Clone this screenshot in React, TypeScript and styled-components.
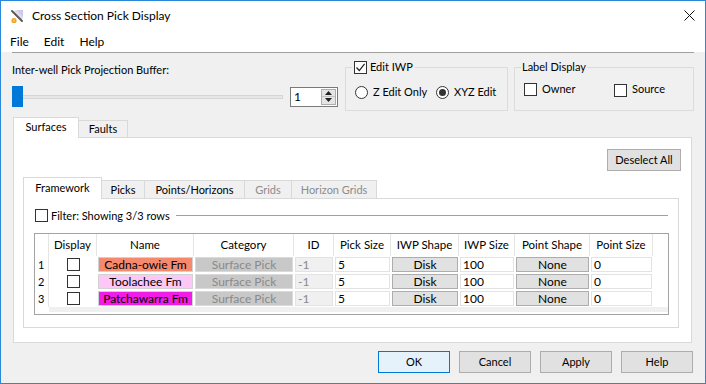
import React from "react";
import styled, { createGlobalStyle } from "styled-components";

const GlobalStyle = createGlobalStyle`
  html, body { margin: 0; padding: 0; background: #fff; }
  body { font-family: Lato, "Noto Sans", sans-serif; font-size: 11px; color: #000; }
  * { box-sizing: border-box; }
`;

const Window = styled.div`
  width: 706px;
  height: 384px;
  border: 1px solid #2b87d9;
  background: #f0f0f0;
  display: flex;
  flex-direction: column;
  overflow: hidden;
`;

const TitleBar = styled.div`
  height: 29px;
  background: #fff;
  display: flex;
  align-items: center;
  padding-left: 8px;
  padding-right: 10px;
  font-size: 12px;
`;

const TitleText = styled.span`
  margin-left: 7px;
  flex: 1;
  line-height: 16px;
`;

const MenuBar = styled.div`
  height: 22px;
  background: #fff;
  display: flex;
  align-items: center;
  padding-left: 9px;
  gap: 15px;
  font-size: 12px;
`;

const MenuItem = styled.span`
  line-height: 16px;
  padding-top: 1px;
`;

const Separator = styled.div`
  height: 1px;
  margin: 0 11px 0 11px;
  background: #a0a0a0;
`;

const TopRow = styled.div`
  margin-top: 5px;
  height: 53px;
  display: flex;
  align-items: flex-start;
  padding-left: 11px;
`;

const BufferColumn = styled.div`
  width: 328px;
  display: flex;
  flex-direction: column;
  padding-top: 4px;
`;

const Label = styled.span<{ $disabled?: boolean }>`
  line-height: 16px;
  white-space: nowrap;
  color: ${(p) => (p.$disabled ? "#8c8c8c" : "#000")};
`;

const SliderRow = styled.div`
  margin-top: 8px;
  display: flex;
  align-items: center;
  height: 21px;
`;

const SliderTrack = styled.div`
  width: 271px;
  height: 21px;
  display: flex;
  align-items: center;
`;

const SliderThumb = styled.div`
  width: 11px;
  height: 21px;
  background: #0078d7;
  flex: none;
`;

const SliderGroove = styled.div`
  flex: 1;
  height: 4px;
  background: #e7e7e7;
  border: 1px solid #d6d6d6;
  border-left: none;
`;

const SpinBox = styled.div`
  margin-left: 7px;
  width: 48px;
  height: 20px;
  border: 1px solid #7a7a7a;
  background: #fff;
  display: flex;
  align-items: center;
  padding-left: 3px;
  padding-right: 1px;
  font-size: 12px;
`;

const SpinValue = styled.span`
  flex: 1;
  line-height: 16px;
`;

const SpinButtons = styled.div`
  width: 15px;
  height: 16px;
  display: flex;
  flex-direction: column;
  border: 1px solid #adadad;
  background: #e5e5e5;
`;

const SpinHalf = styled.div<{ $top?: boolean }>`
  flex: 1;
  display: flex;
  align-items: center;
  justify-content: center;
  border-bottom: ${(p) => (p.$top ? "1px solid #c4c4c4" : "none")};
`;

const Group = styled.fieldset<{ $width: number; $gap: number }>`
  margin: 2px 0 0 ${(p) => p.$gap}px;
  width: ${(p) => p.$width}px;
  height: 51px;
  padding: 0;
  border: 1px solid #dcdcdc;
  min-width: 0;
`;

const GroupLegend = styled.legend<{ $pad: number }>`
  margin-left: 6px;
  padding: 0 ${(p) => p.$pad}px;
  height: 14px;
  line-height: 14px;
  display: flex;
  align-items: center;
  gap: 3px;
`;

const GroupRow = styled.div<{ $top: number }>`
  margin-top: ${(p) => p.$top}px;
  padding-left: 9px;
  display: flex;
  align-items: center;
  height: 16px;
`;

const Option = styled.label<{ $width?: number }>`
  display: flex;
  align-items: center;
  gap: 5px;
  width: ${(p) => (p.$width ? `${p.$width}px` : "auto")};
  line-height: 16px;
  white-space: nowrap;
`;

const Box = styled.span<{ $top?: number }>`
  width: 13px;
  height: 13px;
  flex: none;
  border: 1px solid #333;
  background: #fff;
  display: inline-flex;
  align-items: center;
  justify-content: center;
  margin-top: ${(p) => p.$top ?? 0}px;
`;

const Radio = styled.span<{ $on?: boolean }>`
  width: 13px;
  height: 13px;
  flex: none;
  border: 1px solid #333;
  border-radius: 50%;
  background: #fff;
  display: inline-flex;
  align-items: center;
  justify-content: center;
  &::after {
    content: "";
    width: 7px;
    height: 7px;
    border-radius: 50%;
    background: ${(p) => (p.$on ? "#333" : "transparent")};
  }
`;

const TabArea = styled.div<{ $left: number; $top: number; $width: number }>`
  margin: ${(p) => p.$top}px 0 0 ${(p) => p.$left}px;
  width: ${(p) => p.$width}px;
  display: flex;
  flex-direction: column;
`;

const TabBar = styled.div<{ $height: number }>`
  height: ${(p) => p.$height}px;
  display: flex;
  align-items: flex-end;
`;

const Tab = styled.div<{ $width: number; $active?: boolean; $disabled?: boolean; $h: number }>`
  width: ${(p) => p.$width}px;
  height: ${(p) => (p.$active ? p.$h + 1 : p.$h - 3)}px;
  margin-bottom: ${(p) => (p.$active ? -1 : 0)}px;
  background: ${(p) => (p.$active ? "#fff" : "#f0f0f0")};
  border: 1px solid #d9d9d9;
  border-bottom: none;
  border-left-width: ${(p) => (p.$active ? 1 : 0)}px;
  position: relative;
  z-index: ${(p) => (p.$active ? 1 : 0)};
  display: flex;
  align-items: center;
  justify-content: center;
  padding-bottom: ${(p) => (p.$active ? 2 : 0)}px;
  color: ${(p) => (p.$disabled ? "#8c8c8c" : "#000")};
  white-space: nowrap;
  line-height: 16px;
`;

const Pane = styled.div<{ $height: number }>`
  height: ${(p) => p.$height}px;
  background: #fff;
  border: 1px solid #d9d9d9;
  display: flex;
  flex-direction: column;
`;

const ButtonRowRight = styled.div`
  margin-top: 11px;
  padding-right: 10px;
  display: flex;
  justify-content: flex-end;
`;

const Button = styled.div<{ $width: number; $default?: boolean }>`
  width: ${(p) => p.$width}px;
  height: 22px;
  background: ${(p) => (p.$default ? "#e5f1fb" : "#e1e1e1")};
  border: 1px solid ${(p) => (p.$default ? "#0078d7" : "#adadad")};
  display: flex;
  align-items: center;
  justify-content: center;
  line-height: 16px;
`;

const FilterRow = styled.div`
  margin-top: 10px;
  padding-left: 11px;
  padding-right: 10px;
  height: 13px;
  display: flex;
  align-items: center;
  gap: 3px;
`;

const FilterLine = styled.div`
  flex: 1;
  height: 1px;
  background: #a0a0a0;
  margin-left: 3px;
`;

const Table = styled.div`
  margin: 11px 0 0 10px;
  width: 635px;
  height: 82px;
  border: 1px solid #a3a3a3;
  background: #fff;
  display: grid;
  grid-template-columns: 14px 48px 97px 100px 40px 57px 68px 56px 75px 63px 1fr;
  grid-template-rows: 22px 17px 17px 17px 5px;
  align-content: start;
`;

const HeadCell = styled.div<{ $sep?: boolean }>`
  display: flex;
  align-items: center;
  justify-content: center;
  border-right: ${(p) => (p.$sep ? "1px solid #e5e5e5" : "none")};
  white-space: nowrap;
  line-height: 16px;
  font-size: 11.5px;
`;

const RowNum = styled.div`
  display: flex;
  align-items: center;
  padding-left: 3px;
  line-height: 15px;
  border-right: 1px solid #e5e5e5;
`;

const CenterCell = styled.div`
  display: flex;
  align-items: center;
  justify-content: center;
`;

const Cell = styled.div`
  padding: 1px;
  display: flex;
`;

const Fill = styled.div<{ $bg: string; $border: string; $color?: string; $center?: boolean }>`
  flex: 1;
  background: ${(p) => p.$bg};
  border: 1px solid ${(p) => p.$border};
  color: ${(p) => p.$color ?? "#000"};
  display: flex;
  align-items: center;
  justify-content: ${(p) => (p.$center ? "center" : "flex-start")};
  padding-left: ${(p) => (p.$center ? 0 : 2)}px;
  font-size: 12px;
  line-height: 13px;
  white-space: nowrap;
  overflow: hidden;
`;

const ScrollStrip = styled.div`
  grid-column: 2 / -1;
  background: #f0f0f0;
`;

const FooterRow = styled.div`
  margin-top: 8px;
  padding-right: 12px;
  display: flex;
  justify-content: flex-end;
  gap: 9px;
`;

const Check = () => (
  <svg width="11" height="11" viewBox="0 0 11 11">
    <path d="M1.5 5.5 L4.3 8.5 L9.6 1.8" fill="none" stroke="#222" strokeWidth="1.2" />
  </svg>
);

const AppIcon = () => (
  <svg width="16" height="16" viewBox="0 0 16 16">
    <path d="M6 2 L14 2 L14 10 Z" fill="#c9cbe8" />
    <path d="M5 3 L8 2 L14 9 L13 12 Z" fill="#dcdcf0" />
    <path d="M3 3 L13 13" stroke="#5a5a5a" strokeWidth="2" strokeLinecap="round" />
    <circle cx="5" cy="12.5" r="2.6" fill="#f0a21e" />
    <circle cx="5" cy="12.5" r="1.2" fill="#f7c45a" />
  </svg>
);

const CloseIcon = () => (
  <svg width="11" height="11" viewBox="0 0 11 11">
    <path d="M0.5 0.5 L10.5 10.5 M10.5 0.5 L0.5 10.5" stroke="#111" strokeWidth="1" />
  </svg>
);

const Arrow = ({ up }: { up?: boolean }) => (
  <svg width="7" height="4" viewBox="0 0 7 4">
    <path d={up ? "M0 4 L3.5 0 L7 4 Z" : "M0 0 L3.5 4 L7 0 Z"} fill="#222" />
  </svg>
);

const rows = [
  { n: 1, name: "Cadna-owie Fm", color: "#f5896d" },
  { n: 2, name: "Toolachee Fm", color: "#fdc8f6" },
  { n: 3, name: "Patchawarra Fm", color: "#ef1de6" },
];

const headers = ["Display", "Name", "Category", "ID", "Pick Size", "IWP Shape", "IWP Size", "Point Shape", "Point Size"];

export default function App() {
  return (
    <>
      <GlobalStyle />
      <Window>
        <TitleBar>
          <AppIcon />
          <TitleText>Cross Section Pick Display</TitleText>
          <CloseIcon />
        </TitleBar>
        <MenuBar>
          <MenuItem>File</MenuItem>
          <MenuItem>Edit</MenuItem>
          <MenuItem>Help</MenuItem>
        </MenuBar>
        <Separator />
        <TopRow>
          <BufferColumn>
            <Label>Inter-well Pick Projection Buffer:</Label>
            <SliderRow>
              <SliderTrack>
                <SliderThumb />
                <SliderGroove />
              </SliderTrack>
              <SpinBox>
                <SpinValue>1</SpinValue>
                <SpinButtons>
                  <SpinHalf $top>
                    <Arrow up />
                  </SpinHalf>
                  <SpinHalf>
                    <Arrow />
                  </SpinHalf>
                </SpinButtons>
              </SpinBox>
            </SliderRow>
          </BufferColumn>
          <Group $width={163} $gap={5}>
            <GroupLegend $pad={2}>
              <Box>
                <Check />
              </Box>
              <Label>Edit IWP</Label>
            </GroupLegend>
            <GroupRow $top={10}>
              <Option $width={81}>
                <Radio />
                Z Edit Only
              </Option>
              <Option>
                <Radio $on />
                XYZ Edit
              </Option>
            </GroupRow>
          </Group>
          <Group $width={180} $gap={6}>
            <GroupLegend $pad={1}>
              <Label>Label Display</Label>
            </GroupLegend>
            <GroupRow $top={7}>
              <Option $width={90}>
                <Box />
                Owner
              </Option>
              <Option>
                <Box $top={2} />
                Source
              </Option>
            </GroupRow>
          </Group>
        </TopRow>

        <TabArea $left={12} $top={6} $width={679}>
          <TabBar $height={20}>
            <Tab $width={66} $h={20} $active>
              Surfaces
            </Tab>
            <Tab $width={49} $h={20}>
              Faults
            </Tab>
          </TabBar>
          <Pane $height={206}>
            <ButtonRowRight>
              <Button $width={74}>Deselect All</Button>
            </ButtonRowRight>
            <TabArea $left={9} $top={6} $width={656}>
              <TabBar $height={21}>
                <Tab $width={79} $h={21} $active>
                  Framework
                </Tab>
                <Tab $width={43} $h={21}>
                  Picks
                </Tab>
                <Tab $width={100} $h={21}>
                  Points/Horizons
                </Tab>
                <Tab $width={47} $h={21} $disabled>
                  Grids
                </Tab>
                <Tab $width={85} $h={21} $disabled>
                  Horizon Grids
                </Tab>
              </TabBar>
              <Pane $height={130}>
                <FilterRow>
                  <Box />
                  <Label>Filter: Showing 3/3 rows</Label>
                  <FilterLine />
                </FilterRow>
                <Table>
                  <HeadCell $sep />
                  {headers.map((h) => (
                    <HeadCell key={h} $sep>
                      {h}
                    </HeadCell>
                  ))}
                  <HeadCell />
                  {rows.map((r) => (
                    <React.Fragment key={r.n}>
                      <RowNum>{r.n}</RowNum>
                      <CenterCell>
                        <Box />
                      </CenterCell>
                      <Cell>
                        <Fill $bg={r.color} $border="#d2d2d2" $center>
                          {r.name}
                        </Fill>
                      </Cell>
                      <Cell>
                        <Fill $bg="#c8c8c8" $border="#dadada" $color="#8a8a8a" $center>
                          Surface Pick
                        </Fill>
                      </Cell>
                      <Cell>
                        <Fill $bg="#f0f0f0" $border="#e3e3e3" $color="#8a8a8a">
                          -1
                        </Fill>
                      </Cell>
                      <Cell>
                        <Fill $bg="#fff" $border="#e3e3e3">5</Fill>
                      </Cell>
                      <Cell>
                        <Fill $bg="#e1e1e1" $border="#adadad" $center>
                          Disk
                        </Fill>
                      </Cell>
                      <Cell>
                        <Fill $bg="#fff" $border="#e3e3e3">100</Fill>
                      </Cell>
                      <Cell>
                        <Fill $bg="#e1e1e1" $border="#adadad" $center>
                          None
                        </Fill>
                      </Cell>
                      <Cell>
                        <Fill $bg="#fff" $border="#e3e3e3">0</Fill>
                      </Cell>
                      <div />
                    </React.Fragment>
                  ))}
                  <div />
                  <ScrollStrip />
                </Table>
              </Pane>
            </TabArea>
          </Pane>
        </TabArea>

        <FooterRow>
          <Button $width={72} $default>
            OK
          </Button>
          <Button $width={72}>Cancel</Button>
          <Button $width={72}>Apply</Button>
          <Button $width={72}>Help</Button>
        </FooterRow>
      </Window>
    </>
  );
}
